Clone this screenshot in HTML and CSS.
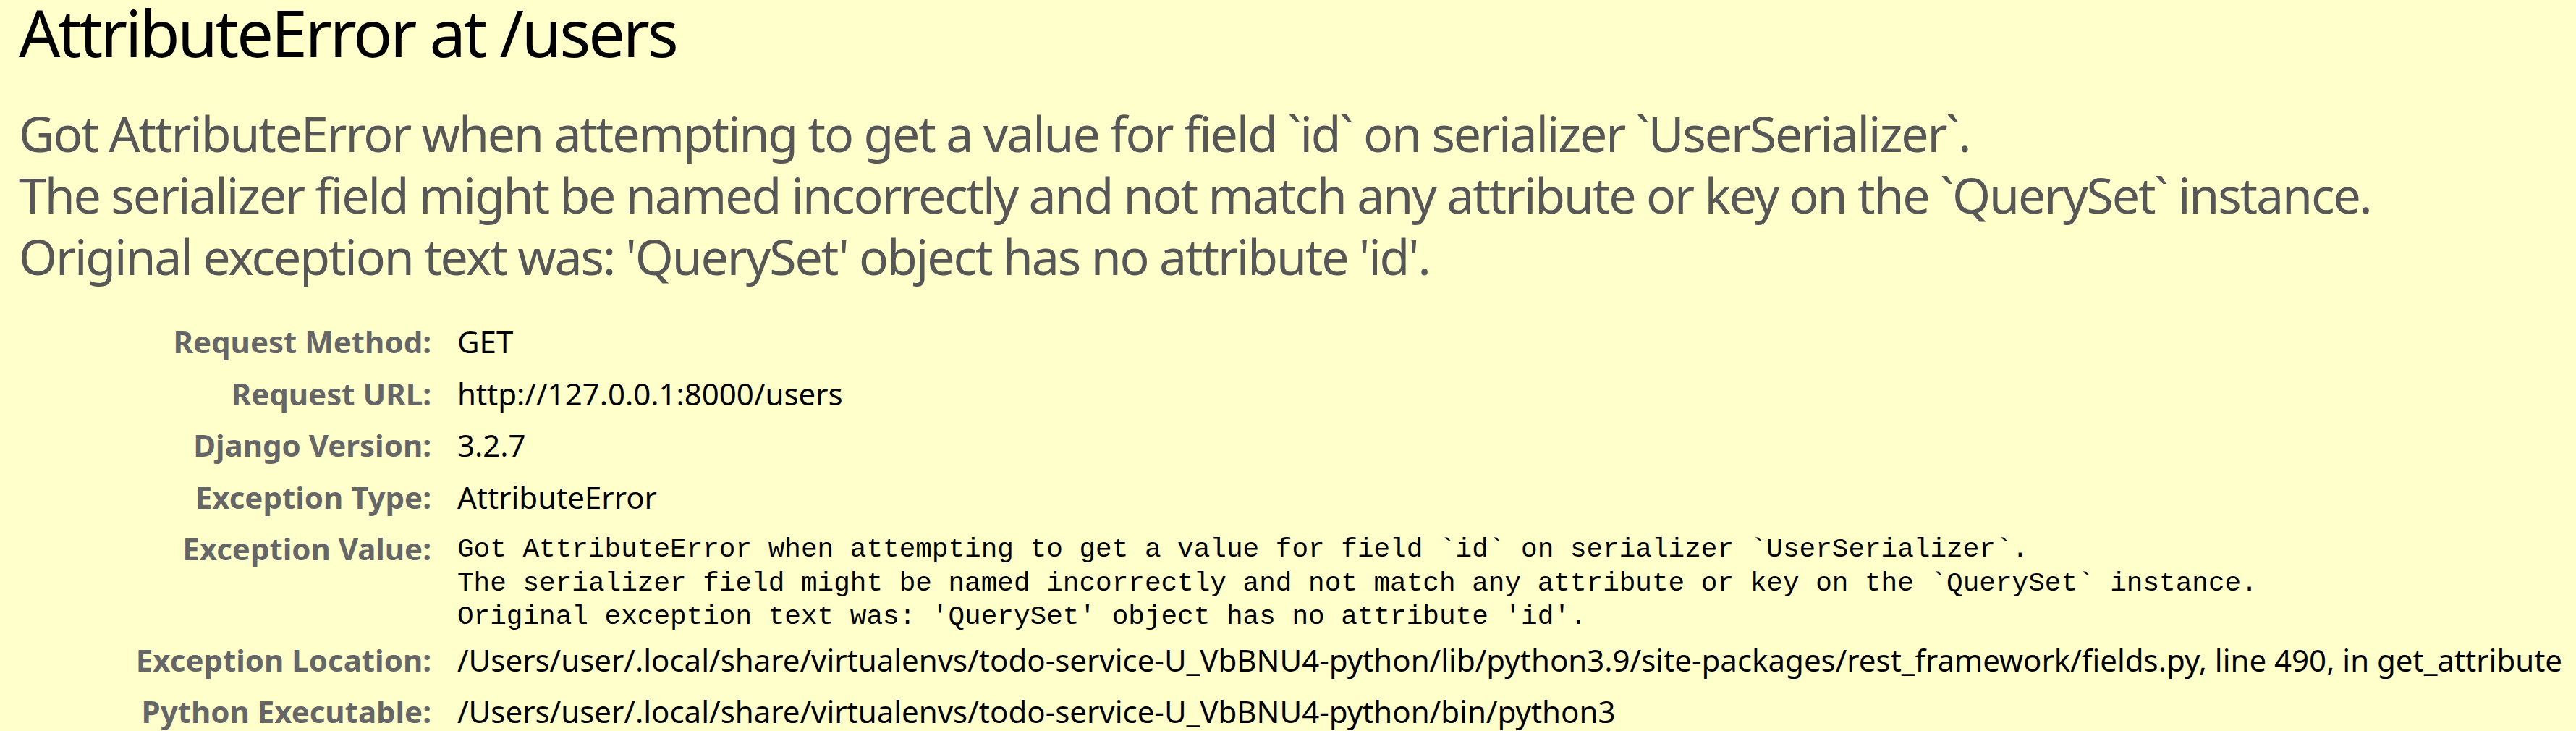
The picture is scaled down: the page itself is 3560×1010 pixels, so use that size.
FILE: index.html
```html
<!DOCTYPE html>
<html lang="en">
<head>
<meta charset="utf-8">
<title>AttributeError at /users</title>
<link rel="stylesheet" href="styles.css">
</head>
<body>
<div class="summary">
  <h1 class="title">AttributeError at /users</h1>
  <h2 class="message">Got AttributeError when attempting to get a value for field `id` on serializer `UserSerializer`.<br>The serializer field might be named incorrectly and not match any attribute or key on the `QuerySet` instance.<br>Original exception text was: 'QuerySet' object has no attribute 'id'.</h2>
  <table class="meta">
    <tr><th>Request Method:</th><td>GET</td></tr>
    <tr><th>Request URL:</th><td>http://127.0.0.1:8000/users</td></tr>
    <tr><th>Django Version:</th><td>3.2.7</td></tr>
    <tr><th>Exception Type:</th><td>AttributeError</td></tr>
    <tr class="exc-value"><th>Exception Value:</th><td><pre class="exception_value">Got AttributeError when attempting to get a value for field `id` on serializer `UserSerializer`.
The serializer field might be named incorrectly and not match any attribute or key on the `QuerySet` instance.
Original exception text was: 'QuerySet' object has no attribute 'id'.</pre></td></tr>
    <tr><th>Exception Location:</th><td>/Users/user/.local/share/virtualenvs/todo-service-U_VbBNU4-python/lib/python3.9/site-packages/rest_framework/fields.py, line 490, in get_attribute</td></tr>
    <tr><th>Python Executable:</th><td>/Users/user/.local/share/virtualenvs/todo-service-U_VbBNU4-python/bin/python3</td></tr>
  </table>
</div>
</body>
</html>
```
FILE: styles.css
```css
html, body {
  margin: 0;
  padding: 0;
  background: #ffffcc;
  overflow: hidden;
}
body {
  font-family: "Noto Sans", "Open Sans", sans-serif;
  color: #000;
}
.summary {
  padding: 0 0 0 26px;
}
.title {
  margin: 0;
  font-size: 90px;
  line-height: 88px;
  font-weight: normal;
  letter-spacing: -0.035em;
  color: #000;
}
.message {
  margin: 53px 0 0 0;
  font-size: 68px;
  line-height: 85px;
  font-weight: normal;
  letter-spacing: -0.0315em;
  color: #575757;
}
.meta {
  margin: 40px 0 0 -26px;
  border-collapse: collapse;
  border-spacing: 0;
}
.meta th, .meta td {
  padding: 10px 0;
  font-size: 42px;
  line-height: 51.5px;
  vertical-align: top;
  white-space: nowrap;
}
.meta th {
  width: 596px;
  padding-right: 36px;
  text-align: right;
  font-weight: bold;
  color: #666;
}
.meta td {
  color: #000;
}
.meta .exc-value td {
  padding-bottom: 0;
}
.exception_value {
  margin: 4px 0 0 0;
  font-family: "Liberation Mono", "Courier New", monospace;
  font-size: 37.7px;
  line-height: 46.5px;
  color: #000;
}
```
